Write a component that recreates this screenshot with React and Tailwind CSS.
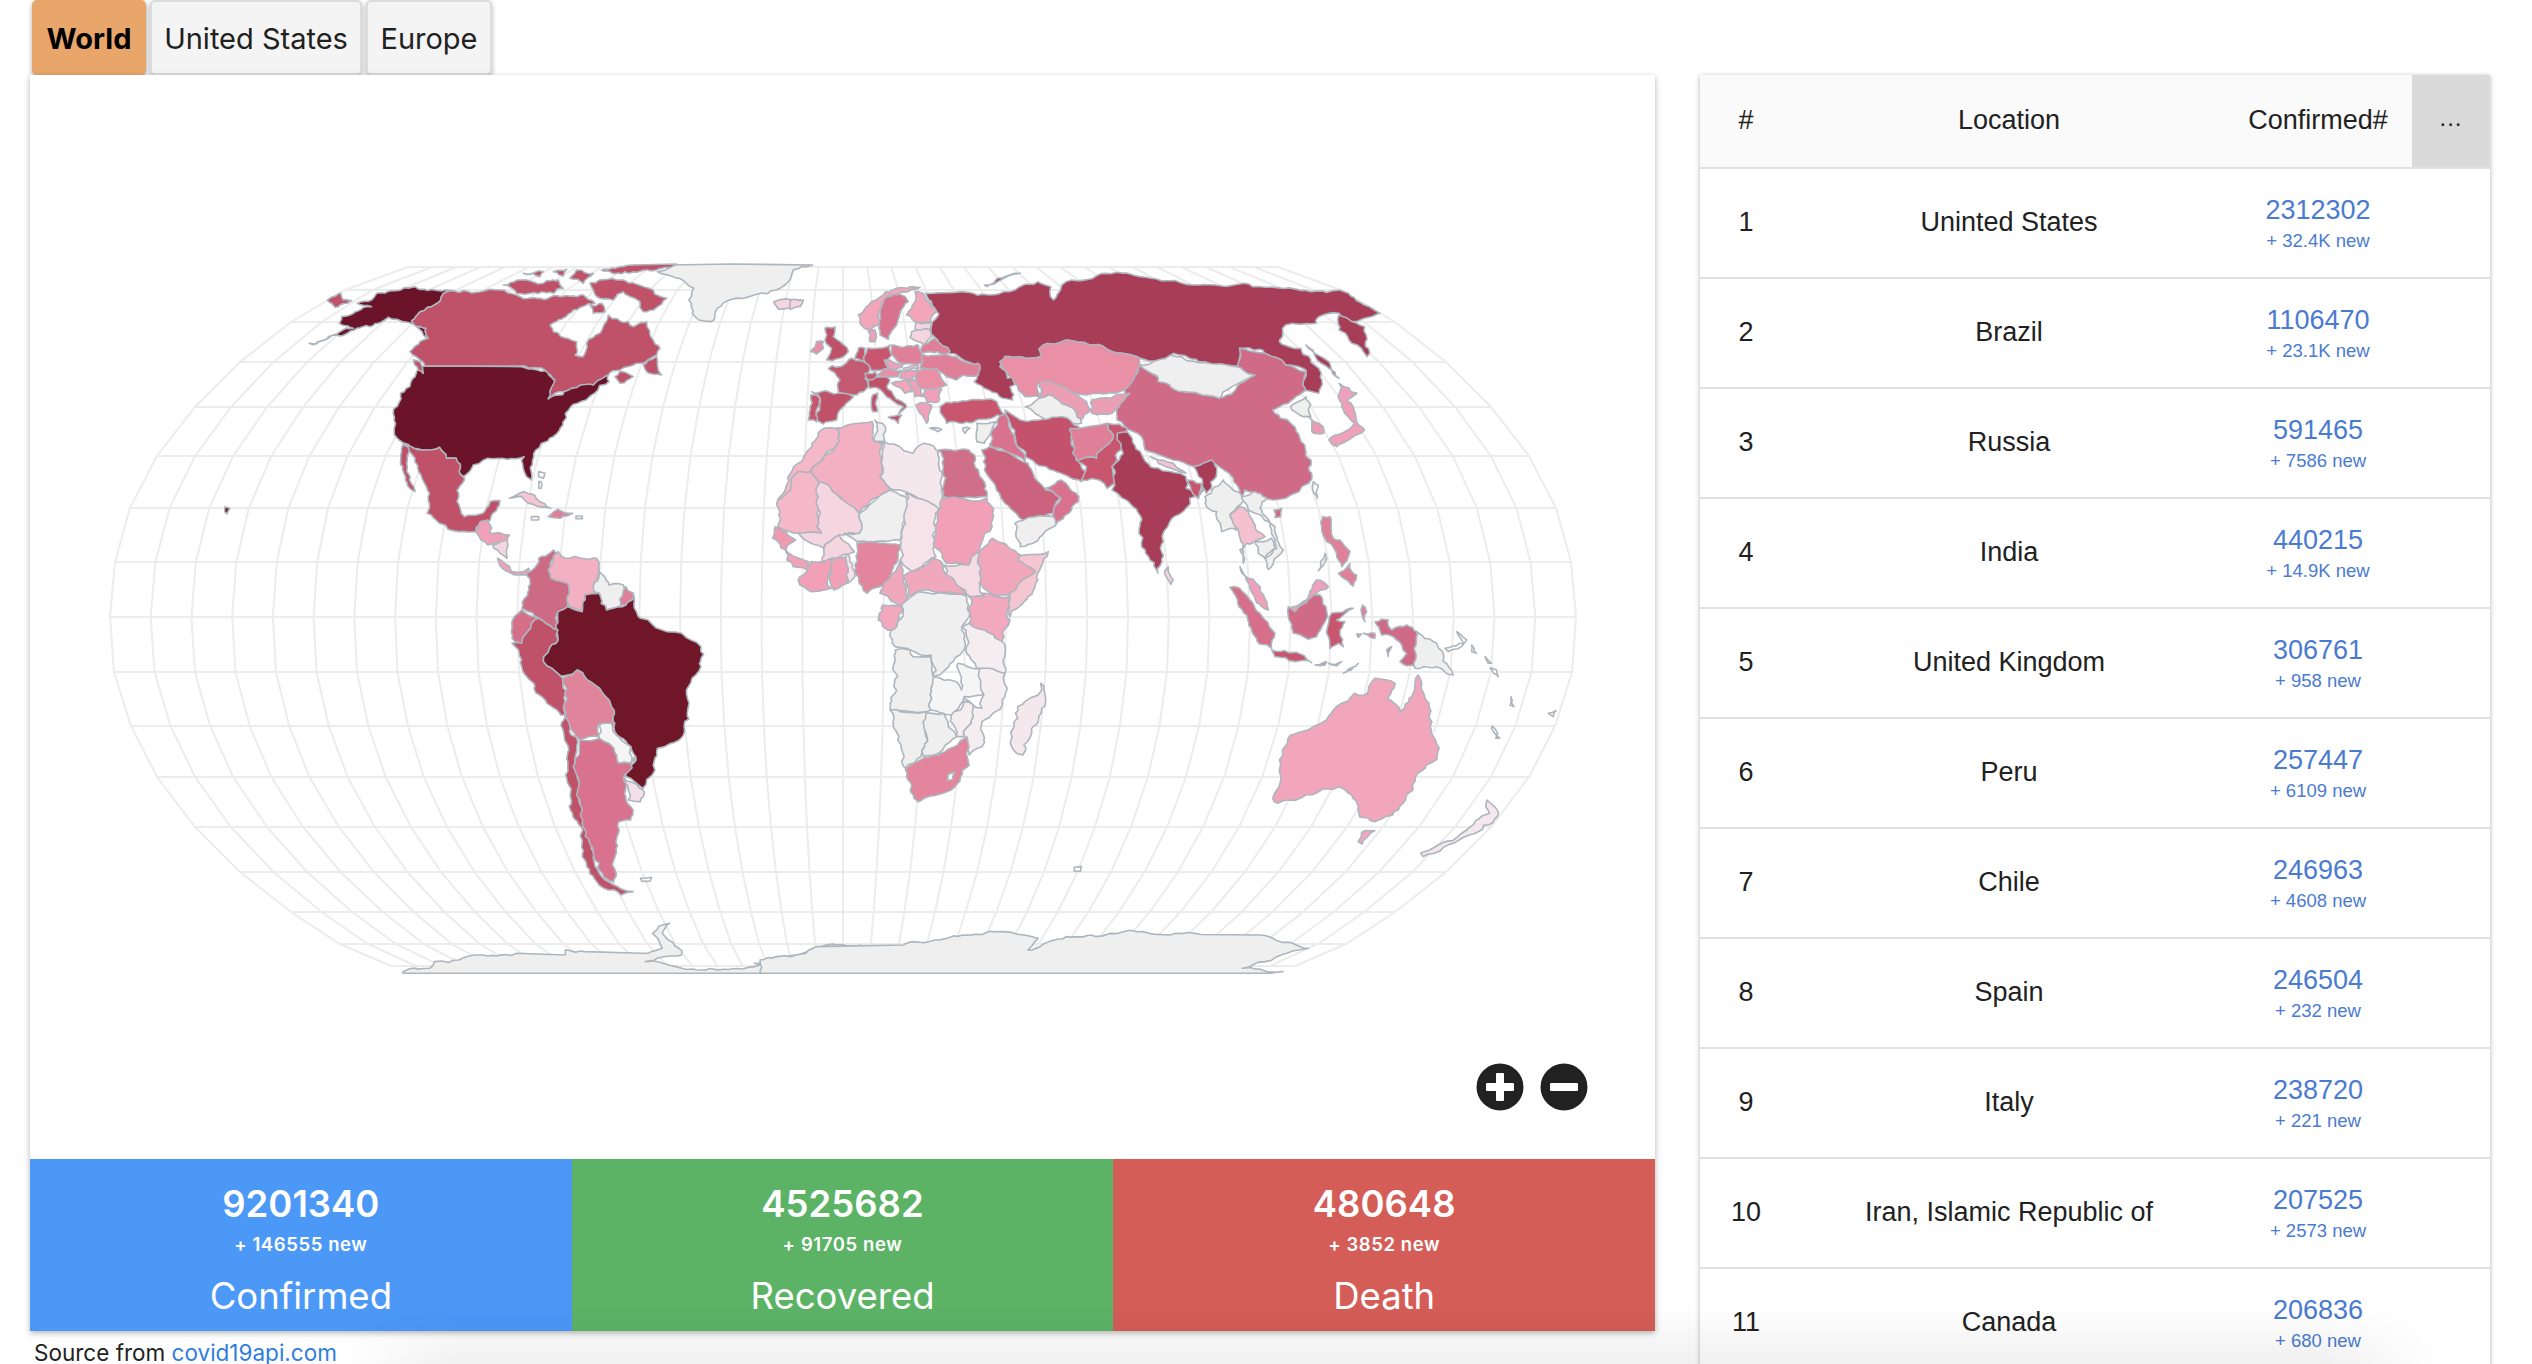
import React from "react";

const rows = [
  ["1", "Uninted States", "2312302", "+ 32.4K new"],
  ["2", "Brazil", "1106470", "+ 23.1K new"],
  ["3", "Russia", "591465", "+ 7586 new"],
  ["4", "India", "440215", "+ 14.9K new"],
  ["5", "United Kingdom", "306761", "+ 958 new"],
  ["6", "Peru", "257447", "+ 6109 new"],
  ["7", "Chile", "246963", "+ 4608 new"],
  ["8", "Spain", "246504", "+ 232 new"],
  ["9", "Italy", "238720", "+ 221 new"],
  ["10", "Iran, Islamic Republic of", "207525", "+ 2573 new"],
  ["11", "Canada", "206836", "+ 680 new"],
];

const stats = [
  ["9201340", "+ 146555 new", "Confirmed", "bg-[#4c98f7]"],
  ["4525682", "+ 91705 new", "Recovered", "bg-[#5cb366]"],
  ["480648", "+ 3852 new", "Death", "bg-[#d45d58]"],
];

// latitude rows of the projection: page y and half width, every 10 degrees
const CX = 843;
const north = [[617, 733], [562, 728], [508, 713], [456, 686], [407, 648], [362, 603], [322, 552], [290, 498], [267, 435]];
const south = [[617, 733], [672, 729], [726, 712], [777, 686], [827, 648], [872, 603], [912, 552], [944, 503], [966, 452]];
const lonLines = [];
for (let i = -18; i <= 18; i++) lonLines.push(i);

function Graticule() {
  const all = [...north.slice(1).reverse(), ...south];
  return (
    <g fill="none" stroke="#ececec" strokeWidth="2">
      {all.map(([y, w]) => (
        <line key={y} x1={CX - w} x2={CX + w} y1={y} y2={y} />
      ))}
      {lonLines.map((i) => (
        <polyline key={i} points={all.map(([y, w]) => `${CX + (w * i) / 18},${y}`).join(" ")} />
      ))}
    </g>
  );
}

// shapes below are read off the reference crops, each group has its own crop scale
const DARK = "#6b1328";
const RUS = "#a83d58";
const CAN = "#bf5269";
const GREY = "#efefef";

const west = [
  [GREY, "1180,45 1300,42 1470,45 1430,60 1425,85 1395,120 1350,135 1285,160 1260,215 1235,210 1222,190 1215,150 1225,115 1195,85 1150,65"],
  ["#f5d5df", "1390,155 1445,150 1445,170 1400,178"],
  [DARK, "672,348 870,350 925,362 940,395 925,447 985,410 1030,385 1048,375 1050,395 1020,430 985,460 960,490 955,525 935,560 895,610 890,690 880,680 875,620 830,625 800,625 770,645 750,680 735,625 715,625 700,592 665,600 625,578 607,545 605,490 620,430 650,380 660,350"],
  [CAN, "625,580 665,600 700,592 715,625 735,625 752,685 740,740 752,800 790,790 805,755 825,752 805,810 785,820 775,845 740,845 700,820 675,790 680,730 650,625 635,590"],
  [CAN, "625,585 635,590 640,680 650,725 630,690 625,650"],
  ["#f0a0b8", "775,845 785,815 800,810 805,850 845,855 840,875 800,885"],
  ["#f5d5df", "810,885 840,870 840,925 820,900"],
  ["#f0a0b8", "820,925 850,965 885,955 880,975 855,975 830,955"],
  ["#f5c5d2", "845,745 875,725 900,745 930,775 905,770 870,740"],
  ["#df7f98", "925,800 945,778 975,790 950,805"],
  ["#ffffff", "890,800 905,800 905,810 890,810"],
  ["#ffffff", "982,798 995,798 995,806 982,806"],
  ["#ffffff", "905,665 918,670 915,685 905,680"],
  ["#ffffff", "905,695 910,695 910,715 905,715"],
  [DARK, "258,770 268,775 262,792 257,785"],
  ["#cd6b85", "935,900 940,920 925,960 930,985 965,1000 965,1070 945,1085 945,1140 905,1105 870,1075 885,1020 880,975 905,925"],
  ["#f3b0c2", "945,905 960,925 1025,925 1030,965 1020,1030 1000,1035 995,1085 970,1070 965,1000 930,985 925,960"],
  [GREY, "1030,965 1050,1005 1080,1005 1075,1065 1045,1080 1030,1030 1020,1025"],
  ["#df7f98", "1085,1010 1100,1030 1085,1065 1075,1065"],
  ["#6f1729", "1030,1030 1045,1080 1085,1065 1100,1030 1115,1105 1160,1140 1200,1150 1240,1190 1240,1250 1210,1320 1205,1430 1195,1470 1150,1495 1145,1560 1120,1615 1085,1580 1105,1520 1095,1490 1060,1430 1055,1370 1035,1325 985,1260 950,1278 940,1265 915,1220 945,1170 945,1085 965,1070 995,1085 1000,1035"],
  ["#d56f8a", "870,1080 905,1105 870,1180 850,1165 855,1100"],
  [CAN, "905,1105 945,1140 945,1170 915,1220 940,1265 950,1278 955,1300 960,1395 950,1395 900,1330 870,1230 850,1180 870,1180"],
  ["#e0849c", "955,1285 985,1260 1035,1325 1055,1370 1060,1430 1030,1420 1030,1460 990,1470 960,1400"],
];

const northAm = [
  [DARK, "230,100 345,80 450,92 335,182 350,200 378,205 385,235 370,225 345,195 290,178 265,172 210,200 170,205 110,225 28,250 100,225 160,205 118,190 125,170 175,152 215,140 172,130 215,120"],
  [CAN, "82,120 122,100 130,120 155,122 120,135 105,142"],
  [CAN, "450,92 475,97 570,88 600,90 660,110 720,115 780,110 850,105 885,130 820,150 750,195 760,215 830,245 825,285 850,290 860,250 900,220 925,165 985,185 1000,200 1040,185 1050,225 1080,265 1070,285 1010,310 960,330 925,345 880,375 790,395 745,415 765,360 735,330 660,318 375,318 355,295 330,275 360,245 385,235 378,205 350,200 335,182"],
  [CAN, "610,75 660,60 730,70 775,60 790,85 760,100 690,100 650,100"],
  [CAN, "670,40 730,35 720,50"],
  [CAN, "760,35 800,28 790,48"],
  [CAN, "905,30 1000,15 1130,12 1050,32 975,35 930,35"],
  [CAN, "870,70 900,60 960,60 1060,90 1100,115 1060,150 1030,155 1020,125 970,95 940,120 900,115 880,90"],
  [CAN, "830,30 880,40 850,70 810,55"],
  [CAN, "870,135 905,130 915,155 880,160"],
  [CAN, "1030,315 1070,290 1085,345 1040,335"],
  [CAN, "945,350 960,335 1000,350 960,370"],
  [CAN, "340,300 360,305 370,340 355,330"],
];

const southAm = [
  ["#f5f5f5", "1030,255 1055,250 1065,285 1095,320 1095,370 1070,370 1060,325 1030,295"],
  [CAN, "960,230 985,300 985,400 995,500 1010,600 1030,700 1060,735 1100,755 1075,765 1040,745 1010,700 995,650 995,600 975,520 965,380"],
  ["#d8728e", "990,300 1030,295 1060,325 1070,370 1095,370 1105,350 1080,415 1085,470 1100,510 1095,540 1070,545 1065,600 1060,660 1065,700 1060,725 1030,690 1010,610 995,510 982,400"],
  ["#f5e0e8", "1082,415 1120,450 1115,485 1090,480"],
  ["#ffffff", "1115,715 1138,712 1135,724 1118,724"],
  [GREY, "625,995 680,985 690,965 740,960 790,945 860,940 960,945 960,930 1000,935 1120,940 1160,925 1140,880 1175,850 1160,880 1200,945 1125,965 1200,985 1240,990 1380,975 1350,970 1440,945 1470,925 1568,915 1568,1000 625,1000"],
];

const east = [
  [RUS, "325,130 395,125 450,135 545,95 570,110 575,150 600,95 680,70 745,80 860,105 950,100 1080,125 1145,125 1215,190 1185,205 1160,215 1135,190 1095,200 1090,220 1030,225 1018,275 1060,295 1100,370 1095,430 1065,420 1070,360 1030,345 985,300 940,295 945,350 880,340 810,310 790,335 745,325 655,285 600,270 555,285 550,320 480,320 470,350 485,385 510,380 490,410 495,450 465,430 440,415 420,395 425,350 390,320 350,280 335,235 350,190 345,185"],
  [RUS, "1135,195 1160,215 1185,230 1190,320 1160,280 1135,240"],
  [RUS, "1070,285 1110,330 1135,385 1100,340"],
  [RUS, "440,105 510,70 465,85 445,110"],
  [GREY, "1040,470 1070,440 1080,500 1065,500"],
  ["#ec9db3", "1075,500 1095,520 1105,550 1085,550"],
  ["#f0a0b8", "1135,400 1170,430 1150,450 1185,540 1130,590 1115,570 1165,520 1140,470"],
  ["#cf6b86", "700,470 745,345 830,425 900,445 935,410 970,375 935,350 940,295 990,310 1030,345 1070,365 1070,420 1050,440 1005,480 1040,520 1080,630 1075,700 1030,745 1005,750 950,720 945,740 900,650 885,630 850,650 810,630 755,600 740,550 700,510"],
  [GREY, "745,345 805,315 880,340 935,350 970,375 925,410 900,445 830,425 780,395"],
  ["#e98fa6", "470,335 480,320 550,320 555,285 600,270 655,285 745,325 745,345 725,405 695,430 640,435 610,425 570,400 545,400 548,440 520,440 495,385"],
  ["#eb9fb4", "548,400 570,395 640,455 650,480 630,510 565,435 545,450"],
  [GREY, "520,470 565,435 620,490 630,520 600,530 550,500"],
  ["#eb9fb4", "650,450 725,430 690,490 650,490"],
  ["#c4526c", "480,480 510,510 590,500 625,530 610,570 640,670 630,695 590,670 540,640 520,620 500,560"],
  ["#d9728e", "465,510 480,490 510,600 520,635 490,610 450,585"],
  [GREY, "425,520 465,515 440,580 425,575"],
  ["#cb627e", "435,600 450,590 490,610 525,640 560,720 590,740 575,790 540,800 520,815 480,760 440,660"],
  ["#d9728e", "590,690 625,740 605,790 578,825 575,790 590,745 560,715"],
  [GREY, "500,820 540,800 575,800 580,825 510,890"],
  ["#df7f98", "608,535 680,520 685,580 660,625 620,630"],
  ["#c9566f", "680,520 720,535 700,630 690,650 695,700 680,715 665,690 630,690 640,650 620,630 660,625 685,580"],
  [RUS, "700,550 720,545 750,620 765,650 835,680 835,715 860,730 890,645 870,720 842,745 835,775 790,850 780,970 755,900 725,760 690,720 695,660 690,650 712,610"],
  ["#f3c5d2", "765,620 810,640 835,670 795,650"],
  ["#c9566f", "838,690 865,700 860,745 845,720"],
  [RUS, "850,650 885,630 895,670 875,730 860,680"],
  ["#f5d5df", "800,950 810,990 805,1003 798,985"],
  ["#f5b8c8", "125,535 150,535 155,575 100,660 60,730 35,750 60,670 90,610"],
  ["#f3b0c2", "150,535 220,515 225,575 240,580 235,680 255,715 190,790 100,665 155,575"],
  [GREY, "225,510 240,520 245,575 225,575"],
  ["#f5e8ec", "240,575 300,610 320,580 350,605 355,775 275,720 255,715 235,680"],
  ["#d06f89", "350,600 410,600 445,740 358,740"],
  ["#f5b8c8", "35,750 60,720 75,665 100,665 190,790 120,695 120,850 75,850 35,830"],
  ["#f5d5df", "118,695 195,790 195,850 155,855 125,895 100,880 75,850 120,850"],
  [GREY, "195,790 255,720 285,740 275,870 190,875 165,850 195,850"],
  ["#f5e3e9", "285,730 350,775 340,850 345,920 300,975 275,930 275,870"],
  ["#f2a0b7", "358,745 445,745 455,830 430,905 410,945 365,940 340,880 345,850"],
  ["#f2a6bb", "455,865 505,910 540,965 500,1030 465,1040 430,1000 430,905"],
  ["#f5c5d2", "505,925 565,905 540,1000 490,1100 490,1030 540,965"],
  ["#f2a9bd", "440,1030 465,1040 490,1040 490,1110 475,1175 410,1120 410,1040"],
  ["#f5dbe3", "360,945 410,945 430,905 430,1000 440,1040 410,1040 365,975"],
  ["#f0a8bc", "280,980 340,925 365,975 405,1035 315,1020 290,1040"],
  ["#e3869d", "190,880 275,885 270,930 235,1010 210,1030 185,965"],
  ["#f0a8bc", "275,930 290,1040 280,1070 235,1030"],
  ["#f2a9bd", "240,1065 280,1070 275,1145 250,1140 232,1110"],
  [GREY, "310,1025 405,1040 410,1100 395,1140 400,1200 370,1250 340,1280 335,1215 265,1190 255,1160 280,1100 280,1060"],
  ["#f09ab2", "30,830 70,870 50,900 25,865"],
  ["#f2a0b7", "50,900 95,935 100,960 65,950"],
  ["#f2a0b7", "100,935 140,925 140,1015 100,1025 75,990"],
  ["#f2a0b7", "140,920 170,920 170,1000 145,1020"],
  ["#f5e3e9", "172,910 185,965 172,1000"],
  ["#f5d5df", "125,895 155,855 185,905 140,925 122,935"],
  ["#f5eef0", "410,1120 475,1175 480,1270 440,1290 405,1190 395,1130"],
];

const europe = [
  ["#f5d5df", "0,65 40,60 30,78 0,88"],
  ["#f3a5ba", "205,105 265,55 320,25 390,22 355,35 320,45 290,50 270,90 265,135 235,150 210,130"],
  ["#d9728e", "270,95 290,50 330,42 355,65 330,100 320,135 295,178 270,165"],
  ["#f3a5ba", "375,35 400,40 440,95 420,125 375,125 350,105 375,65"],
  ["#f5d5df", "380,125 425,125 420,150 375,145"],
  ["#f5d5df", "365,155 420,150 425,170 400,195 360,172"],
  ["#f0a0b8", "235,155 255,150 255,185 240,185"],
  [CAN, "105,145 135,140 130,170 150,185 175,215 150,235 110,240 125,205 105,180"],
  ["#e98fa6", "62,215 80,185 100,185 100,205 80,222"],
  ["#df7f98", "395,200 435,175 480,215 465,222 395,220"],
  ["#df7f98", "305,195 385,195 395,250 340,252 305,225"],
  ["#c9566f", "232,205 300,195 305,225 285,245 295,265 245,272 220,230"],
  ["#c9566f", "205,205 225,205 220,245 195,235"],
  ["#c25a72", "115,265 150,260 185,235 240,260 225,295 235,320 200,345 145,335 150,300"],
  [CAN, "65,335 145,340 190,350 155,385 140,420 100,432 80,420 90,355"],
  ["#c9566f", "62,345 90,355 80,425 55,420"],
  ["#c9566f", "225,280 255,275 260,295 235,300"],
  [CAN, "235,300 285,285 300,300 290,320 310,345 350,380 340,390 325,405 340,380 300,355 265,325 240,325"],
  [CAN, "295,412 335,405 325,430"],
  [CAN, "248,345 262,340 262,395 248,395"],
  ["#f0a0b8", "282,240 340,250 335,262 295,265"],
  ["#e98fa6", "262,285 295,265 335,270 325,290 290,290"],
  ["#f3c5d2", "340,265 385,255 385,265 345,275"],
  ["#f0a0b8", "335,275 385,268 385,285 355,300 330,295"],
  ["#df7f98", "395,222 465,222 510,240 565,250 565,285 520,285 500,300 470,290 445,270 390,265"],
  ["#e98fa6", "385,272 440,265 470,315 440,328 390,325 378,300"],
  ["#f0a0b8", "358,300 378,300 392,325 400,350 375,350 362,320"],
  ["#f0a0b8", "405,330 455,328 445,365 410,368 400,345"],
  ["#f3a5ba", "305,310 355,302 365,335 345,340"],
  ["#f0a0b8", "378,375 400,368 425,375 420,395 410,430 390,400"],
  ["#c9566f", "450,380 540,360 620,365 640,405 560,420 510,430 470,430"],
  [GREY, "420,445 455,448 445,455"],
  [GREY, "518,445 540,445 525,460"],
];

const seAsia = [
  [GREY, "75,50 130,0 150,20 190,60 150,105 170,150 125,155 110,95 85,85"],
  [GREY, "185,50 225,35 260,55 240,85 285,140 310,210 265,268 255,235 290,205 270,130 225,100 205,90"],
  ["#f5c0cf", "150,105 180,80 205,95 225,135 255,170 230,180 200,190 180,210 190,250 180,175 160,130"],
  [GREY, "225,185 275,175 285,205 255,235 235,220"],
  ["#f0a0b8", "180,260 205,295 240,320 265,390 245,380 210,325"],
  ["#cf6b86", "282,90 305,85 302,110 285,112"],
  ["#ffffff", "400,5 415,15 412,55 398,30"],
  ["#df7f98", "428,110 450,110 460,175 480,180 510,215 505,230 485,260 470,220 440,185 425,150"],
  ["#df7f98", "475,280 510,250 530,285 520,318 500,300"],
  [GREY, "435,220 440,235 415,272"],
  ["#f0a0b8", "330,385 380,360 410,300 445,320 400,345 345,395"],
  ["#cf6b86", "325,380 345,395 400,345 420,345 440,395 410,470 385,478 340,460"],
  ["#d56f8a", "150,322 180,325 240,400 285,460 275,505 225,470"],
  ["#c9566f", "275,510 340,518 395,548 345,545 285,530"],
  ["#c9566f", "455,400 520,385 490,405 470,420 495,425 480,450 490,500 475,490 450,505 440,460"],
  ["#cf6b86", "585,425 625,420 635,450 680,435 710,455 705,560 660,545 680,520 640,470 605,465"],
  [GREY, "710,455 770,490 790,520 790,545 820,585 770,560 705,565"],
  ["#df7f98", "548,375 560,395 555,425 545,400"],
  ["#df7f98", "530,462 545,462 535,472"],
  ["#df7f98", "550,460 585,460 585,475"],
  ["#df7f98", "620,510 635,500 625,530"],
  ["#df7f98", "405,555 440,545 435,555"],
  ["#df7f98", "445,550 485,545 470,558"],
  ["#f5d5df", "490,580 535,550 505,568"],
  ["#ffffff", "795,505 850,490 830,455 860,480 845,500 805,515"],
  ["#ffffff", "875,495 890,520 875,515"],
  ["#ffffff", "915,530 935,550 925,550"],
  ["#ffffff", "930,565 950,570 955,590"],
];

const southEast = [
  [GREY, "265,30 295,30 300,50 335,50 340,110 350,125 335,145 335,210 255,210 255,190 270,110"],
  ["#f5f5f5", "340,110 385,125 395,150 388,70 430,85 435,165 400,170 375,225 335,210 335,145"],
  ["#f5eef0", "430,85 480,100 480,170 435,245 435,320 410,345 400,290 418,230 400,175 435,205"],
  ["#f5eef0", "375,225 400,185 418,195 418,230 400,290 385,290"],
  [GREY, "255,210 325,215 315,350 285,385 270,300"],
  [GREY, "325,220 360,220 385,290 350,340 320,350"],
  ["#e3869d", "285,390 315,360 350,345 405,290 410,375 375,450 310,485 295,455"],
  ["#ffffff", "368,405 382,395 378,418 368,422"],
  ["#f5e8ed", "550,130 560,180 530,290 515,345 497,330 505,200 545,165"],
  ["#f2a6bb", "1205,115 1245,130 1230,175 1255,215 1280,160 1290,105 1305,180 1320,290 1328,340 1280,450 1240,525 1205,545 1175,530 1170,490 1160,465 1135,440 1070,465 1015,490 1005,475 1025,345 1040,285 1105,245 1130,200 1165,160 1185,165"],
  ["#f2a6bb", "1185,572 1205,572 1180,612 1172,605"],
  ["#f5e8ed", "1425,480 1445,530 1390,585 1300,650 1295,640 1385,570 1430,520"],
  ["#ffffff", "1435,258 1450,295 1442,295"],
  ["#ffffff", "1472,170 1478,200 1470,195"],
  ["#ffffff", "1545,220 1560,212 1555,230"],
  ["#ffffff", "616,682 630,680 628,694 616,694"],
  [GREY, "0,960 60,950 110,920 280,915 350,900 470,875 545,895 525,930 600,890 750,875 980,885 1075,925 990,965 945,985 1025,995 1000,1000 0,1000"],
];

// breaks long edges into small steps so coasts aren't ruler straight.
// offset comes from the midpoint only, so two countries sharing an edge get the same wiggle
const noise = (x, y) => {
  const s = Math.sin(x * 12.9898 + y * 78.233) * 43758.5453;
  return s - Math.floor(s) - 0.5;
};

function split(a, b, out) {
  const dx = b[0] - a[0];
  const dy = b[1] - a[1];
  const len = Math.hypot(dx, dy);
  if (len < 16 || (Math.abs(dy) < 6 && len > 100)) {
    out.push(b);
    return;
  }
  const amp = Math.min(len * 0.16, 6);
  const mx = (a[0] + b[0]) / 2;
  const my = (a[1] + b[1]) / 2;
  const m = [mx + noise(mx, my) * amp * 2, my + noise(my, mx) * amp * 2];
  split(a, m, out);
  split(m, b, out);
}

function rough(points) {
  const pts = points.split(" ").map((p) => p.split(",").map(Number));
  const out = [];
  pts.forEach((p, i) => split(p, pts[(i + 1) % pts.length], out));
  return out.map((p) => p.join(",")).join(" ");
}

function Shapes({ list, transform }) {
  return (
    <g transform={transform} stroke="#adb5bd" strokeWidth="1.6" strokeLinejoin="round">
      {list.map(([fill, points], i) => (
        <polygon key={i} fill={fill} points={rough(points)} vectorEffect="non-scaling-stroke" />
      ))}
    </g>
  );
}

function WorldMap() {
  return (
    <svg width="1625" height="1084" viewBox="30 75 1625 1084" className="block">
      <Graticule />
      <Shapes list={west} transform="translate(100 250) scale(0.4847 0.3333)" />
      <Shapes list={northAm} transform="translate(300 260) scale(0.3333)" />
      <Shapes list={southAm} transform="translate(100 640) scale(0.4847 0.3333)" />
      <Shapes list={east} transform="translate(760 250) scale(0.5102 0.3333)" />
      <Shapes list={europe} transform="translate(790 280) scale(0.3333)" />
      <Shapes list={seAsia} transform="translate(1180 480) scale(0.3333)" />
      <Shapes list={southEast} transform="translate(760 640) scale(0.5102 0.3333)" />
    </svg>
  );
}

function ZoomBtn({ minus }) {
  return (
    <svg width="48" height="48" viewBox="0 0 48 48">
      <circle cx="24" cy="24" r="23.5" fill="#212121" />
      <rect x="10" y="20" width="28" height="8" rx="1" fill="#fff" />
      {!minus && <rect x="20" y="10" width="8" height="28" rx="1" fill="#fff" />}
    </svg>
  );
}

export default function App() {
  return (
    <div className="relative flex h-[1364px] w-full overflow-hidden bg-white font-['Inter',sans-serif] text-[#212121]">
      <div className="ml-[30px] w-[1625px]">
        <div className="ml-[2px] flex h-[75px] gap-[4px]">
          <button className="h-[75px] w-[114px] rounded-[5px] bg-[#e8a66b] pt-[2px] text-[29px] font-bold text-black shadow-[0_2px_5px_rgba(0,0,0,0.35)]">World</button>
          <button className="h-[75px] w-[212px] rounded-[5px] border-2 border-[#dcdcdc] bg-[#f4f4f4] pt-[2px] text-[29px] shadow-[0_2px_5px_rgba(0,0,0,0.3)]">United States</button>
          <button className="h-[75px] w-[126px] rounded-[5px] border-2 border-[#dcdcdc] bg-[#f4f4f4] pt-[2px] text-[29px] shadow-[0_2px_5px_rgba(0,0,0,0.3)]">Europe</button>
        </div>
        <div className="relative bg-white shadow-[0_2px_6px_rgba(0,0,0,0.3)]">
          <WorldMap />
          <div className="absolute left-[1446px] top-[988px] flex gap-[16px]">
            <ZoomBtn />
            <ZoomBtn minus />
          </div>
          <div className="grid h-[172px] grid-cols-3 text-center text-white">
            {stats.map(([total, fresh, label, bg]) => (
              <div key={label} className={`flex flex-col items-center pt-[22px] ${bg}`}>
                <div className="text-[36.5px] font-semibold leading-[46px]">{total}</div>
                <div className="mt-[4px] text-[18.5px] font-semibold leading-[26px] tracking-[0.6px]">{fresh}</div>
                <div className="mt-[14px] text-[36.5px] leading-[50px]">{label}</div>
              </div>
            ))}
          </div>
        </div>
        <div className="ml-[4px] mt-[11px] text-[22.5px] leading-[22px]">
          Source from <a className="text-[#2f7de1]">covid19api.com</a>
        </div>
      </div>

      <div className="ml-[45px] mt-[75px] h-fit w-[790px] font-['Liberation_Sans',sans-serif] shadow-[0_1px_5px_rgba(0,0,0,0.3)]">
        <div className="grid h-[94px] grid-cols-[92px_434px_186px_78px] items-center border-b-[2px] border-[#e0e0e0] bg-[#fafafa] text-center text-[27px]">
          <div className="pb-[2px]">#</div>
          <div className="pb-[2px]">Location</div>
          <div className="pb-[2px] pr-[2px]">Confirmed#</div>
          <div className="flex h-full items-center justify-center bg-[#dadada] pb-[6px] text-[24px] tracking-[1px]">...</div>
        </div>
        {rows.map(([n, place, total, fresh]) => (
          <div key={n} className="grid h-[110px] grid-cols-[92px_434px_186px_78px] items-center border-b-[2px] border-[#e0e0e0] bg-white text-center text-[27px]">
            <div className="pb-[1px]">{n}</div>
            <div className="pb-[1px]">{place}</div>
            <div className="pr-[2px] text-[#4a7bd1]">
              <div className="leading-[36px]">{total}</div>
              <div className="text-[18.5px] leading-[26px]">{fresh}</div>
            </div>
            <div />
          </div>
        ))}
      </div>

      <div className="pointer-events-none absolute bottom-0 left-[340px] right-[90px] h-[60px] bg-gradient-to-b from-transparent to-[rgba(0,0,0,0.06)] [mask-image:linear-gradient(to_right,transparent,black_120px,black_calc(100%-120px),transparent)]" />
    </div>
  );
}
